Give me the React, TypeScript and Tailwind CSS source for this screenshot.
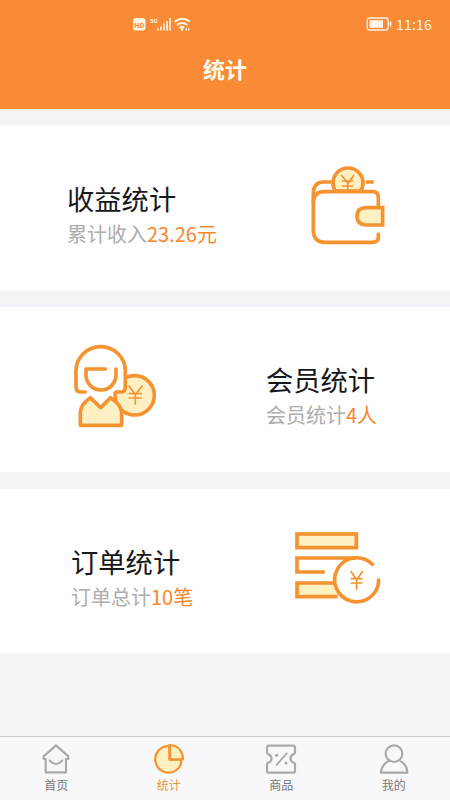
import type { ReactNode } from 'react';

const ORANGE = '#f59331';
const CREAM = '#fff0c4';
const GRAY = '#a9a9ab';

function StatusBar() {
  return (
    <div className="flex h-[47px] items-center pr-[17px] pl-[132px] text-[#fff3e4]">
      <svg width="60" height="18" viewBox="0 0 60 18">
        <rect x="1" y="3" width="12.500" height="12.500" rx="3" fill="#fff3e4" />
        <text x="7.200" y="12.500" textAnchor="middle" fontSize="7.500" fontWeight="700" fontFamily="Roboto, sans-serif" fill="#f78c36">HD</text>
        <text x="18" y="8" fontSize="6" fontWeight="700" fontFamily="Roboto, sans-serif" fill="#fff3e4">5G</text>
        <g stroke="#fff3e4" strokeWidth="1.700" fill="none">
          <path d="M26 15.500v-2M29 15.500v-4M32 15.500v-7M35 15.500V6M38 15.500V3" />
          <path d="M42.500 6.700q8-6 15.500 0M45.100 9.900q5-4 10 0M47.600 12.800q2.500-2 4.600 0" strokeWidth="1.900" />
        </g>
        <circle cx="50" cy="14.500" r="1.400" fill="#fff3e4" />
        <path d="M55 12.600L53.200 14.400l1.800 1.800zM56.200 12.600l1.800 1.800-1.800 1.800z" fill="#fff3e4" />
      </svg>
      <svg className="ml-auto" width="26" height="16" viewBox="0 0 26 16">
        <rect x="1.200" y="2" width="21" height="12" rx="2.500" fill="none" stroke="#fff3e4" strokeWidth="1.300" />
        <rect x="3.500" y="4.300" width="13.500" height="7.500" fill="#fff8f0" />
        <path d="M24.500 5.500v5" stroke="#fff3e4" strokeWidth="1.500" />
      </svg>
      <span className="ml-[4px] w-[37px] text-[14px] leading-none tracking-[0.2px] whitespace-nowrap">11:16</span>
    </div>
  );
}

function WalletIcon() {
  return (
    <svg width="95" height="95" viewBox="0 0 285 285" fill="none" stroke={ORANGE} strokeWidth="11">
      <path d="M106 108A45 45 0 1 1 182 108z" fill={CREAM} />
      <path d="M124 60l20 25 18-25M143 86v20M126 78h34M126 93h34" strokeWidth="5" />
      <path d="M95 81H72Q40 81 40 115V145M197 81h24" />
      <path d="M235 157V127Q235 110 218 110H73Q40 110 40 142V225Q40 262 75 262H218Q235 262 235 247V237" />
      <circle cx="235" cy="237" r="5" fill={ORANGE} stroke="none" />
      <path d="M248 158V210H198Q171 209 171 184T198 158z" fill={CREAM} />
    </svg>
  );
}

function MemberIcon() {
  return (
    <svg width="100" height="100" viewBox="0 0 300 300" fill="none" stroke={ORANGE} strokeWidth="11" strokeLinejoin="round" strokeLinecap="round">
      <circle cx="209" cy="181" r="59" fill={CREAM} />
      <path d="M192 153l19 26 20-26M211 179v28M193 176h36M193 189h36" strokeWidth="5" />
      <path d="M33 171V107A74 72 0 0 1 181 107V171H134V120H60V171z" fill="white" stroke="none" />
      <path d="M60 171H47Q33 171 33 157V107A74 72 0 0 1 181 107V157Q181 171 169 171H153" />
      <path d="M121 102H63V120A45 45 0 0 0 153 120V102" fill="white" />
      <path d="M46 271V232Q47 208 76 188L107 218 137 188Q169 210 170 232V271z" fill={CREAM} />
    </svg>
  );
}

function OrderIcon() {
  return (
    <svg width="105" height="95" viewBox="0 0 315 285" fill="none" stroke={ORANGE} strokeWidth="11">
      <rect x="36" y="42" width="178" height="41" fill={CREAM} />
      <path d="M158 230H36V189H158" fill={CREAM} />
      <path d="M262 133A66 66 0 1 0 281 180" fill="white" strokeLinecap="round" />
      <path d="M214 114H36V156H115" />
      <circle cx="115" cy="156" r="5.500" fill={ORANGE} stroke="none" />
      <path d="M197 153l18 27 18-27M215 180v29M197 176h36M197 189h36" strokeWidth="5" />
    </svg>
  );
}

interface StatProps {
  title: string;
  label: string;
  value: string;
}

function Stat({ title, label, value }: StatProps) {
  return (
    <div className="whitespace-nowrap">
      <h2 className="text-[27.3px] leading-9 text-[#18181b]">{title}</h2>
      <p className="text-[20px] leading-9 text-[#adadad]">
        {label}
        <span className="text-[#f6872f]">{value}</span>
      </p>
    </div>
  );
}

function Tab({ label, active = false, children }: { label: string; active?: boolean; children: ReactNode }) {
  return (
    <div className="flex flex-1 flex-col items-center pt-[4px]">
      <svg width="34" height="34" viewBox="0 0 102 102" fill="none" stroke={active ? ORANGE : GRAY} strokeWidth="6.500" strokeLinejoin="round" strokeLinecap="round">
        {children}
      </svg>
      <span className={active ? 'mt-px text-[12px] leading-[18px] text-[#e8983a]' : 'mt-px text-[12px] leading-[18px] text-[#77777a]'}>{label}</span>
    </div>
  );
}

export default function App() {
  return (
    <div className="flex h-[800px] w-[450px] flex-col overflow-hidden bg-[#f3f3f7] font-['Noto_Sans_CJK_SC',sans-serif]">
      <header className="h-[109px] bg-[#f98b36]">
        <StatusBar />
        <h1 className="text-center text-[22px] leading-[43px] font-bold text-[#fffaf0]">统计</h1>
      </header>
      <main className="flex flex-1 flex-col gap-[17px] pt-[17px]">
        <section className="flex h-[164px] items-start bg-[#fefefe] pr-[55px] pl-[67px]">
          <div className="pt-[54px]">
            <Stat title="收益统计" label="累计收入" value="23.26元" />
          </div>
          <div className="ml-auto pt-[29px]">
            <WalletIcon />
          </div>
        </section>
        <section className="flex h-[165px] items-start bg-[#fefefe] pr-[73px] pl-[65px]">
          <div className="pt-[28px]">
            <MemberIcon />
          </div>
          <div className="ml-auto pt-[54px]">
            <Stat title="会员统计" label="会员统计" value="4人" />
          </div>
        </section>
        <section className="flex h-[165px] items-start bg-[#fefefe] pr-[60px] pl-[71px]">
          <div className="pt-[54px]">
            <Stat title="订单统计" label="订单总计" value="10笔" />
          </div>
          <div className="ml-auto pt-[31px]">
            <OrderIcon />
          </div>
        </section>
      </main>
      <nav className="flex h-[64px] border-t border-[#c9cacf] bg-[#f8f7f9]">
        <Tab label="首页">
          <path d="M14 46L51 13 88 46V54H81V94H20V54H14z" />
          <path d="M32 58Q51 80 70 58" />
        </Tab>
        <Tab label="统计" active>
          <path d="M46 15A40 40 0 1 0 88 66L87 56H52V13z" fill={CREAM} />
          <path d="M54 12Q91 15 93 55H54z" fill={CREAM} />
        </Tab>
        <Tab label="商品">
          <path d="M15 14H87Q93 14 93 20V34Q93 39 89 40A13 13 0 0 0 89 65Q93 66 93 71V89Q93 95 87 95H15Q9 95 9 89V71Q9 66 13 65A13 13 0 0 0 13 40Q9 39 9 34V20Q9 14 15 14z" />
          <path d="M68 37L38 72" strokeWidth="5.500" />
          <circle cx="38" cy="43" r="4.500" fill={GRAY} stroke="none" />
          <circle cx="66" cy="66" r="4.500" fill={GRAY} stroke="none" />
        </Tab>
        <Tab label="我的">
          <circle cx="51" cy="38" r="25" />
          <path d="M36 59Q13 72 12 95H91Q90 72 72 61" />
        </Tab>
      </nav>
    </div>
  );
}
